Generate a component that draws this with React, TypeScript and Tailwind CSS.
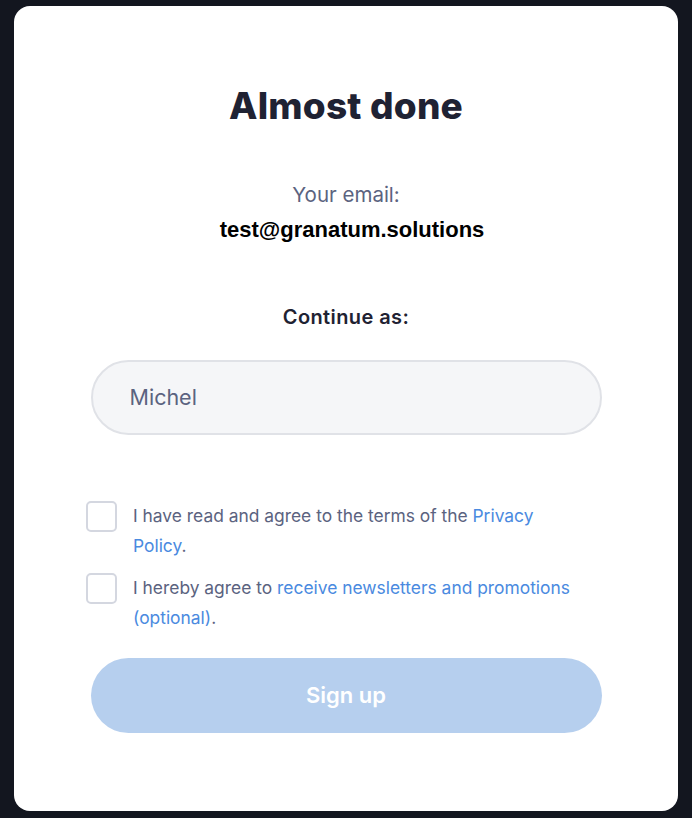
import React from "react";

export default function App() {
  return (
    <div className="min-h-[818px] w-[692px] bg-[#13161f] px-[14px] pt-[6px] pb-[7px]" style={{ fontFamily: "Inter, 'Noto Sans', sans-serif" }}>
      <div className="flex h-[805px] flex-col items-center rounded-[16px] bg-white pt-[76px]">
        <h1 className="text-[37px] font-extrabold leading-[48px] tracking-[0.2px] text-[#1f2233]">Almost done</h1>
        <p className="mt-[52px] text-[20.5px] leading-[26px] text-[#5b6380]">Your email:</p>
        <p className="mt-[10px] pl-[12px] text-[22px] font-bold leading-[24px] text-black" style={{ fontFamily: "'Liberation Sans', Arial, sans-serif" }}>
          test@granatum.solutions
        </p>
        <p className="mt-[62px] text-[20px] font-semibold leading-[26px] tracking-[0.4px] text-[#1f2233]">Continue as:</p>
        <div className="mt-[30px] flex h-[75px] w-[511px] items-center rounded-full border-2 border-[#e0e2e7] bg-[#f5f6f8] px-[37px] text-[21.5px] text-[#5b6380]">
          Michel
        </div>
        <div className="mt-[66px] flex w-[520px] flex-col gap-[12px]">
          <label className="flex items-start gap-[16px]">
            <span className="h-[31px] w-[31px] shrink-0 rounded-[5px] border-2 border-[#d4d7e0] bg-white" />
            <span className="w-[445px] text-[17.4px] leading-[30px] text-[#5b6380]">
              I have read and agree to the terms of the <span className="text-[#4a8ae0]">Privacy Policy</span>.
            </span>
          </label>
          <label className="flex items-start gap-[16px]">
            <span className="h-[31px] w-[31px] shrink-0 rounded-[5px] border-2 border-[#d4d7e0] bg-white" />
            <span className="w-[445px] text-[17.4px] leading-[30px] text-[#5b6380]">
              I hereby agree to <span className="text-[#4a8ae0]">receive newsletters and promotions (optional)</span>.
            </span>
          </label>
        </div>
        <button className="mt-[25px] flex h-[75px] w-[511px] items-center justify-center rounded-full bg-[#b6cfee] text-[22px] font-semibold text-white">
          Sign up
        </button>
      </div>
    </div>
  );
}
